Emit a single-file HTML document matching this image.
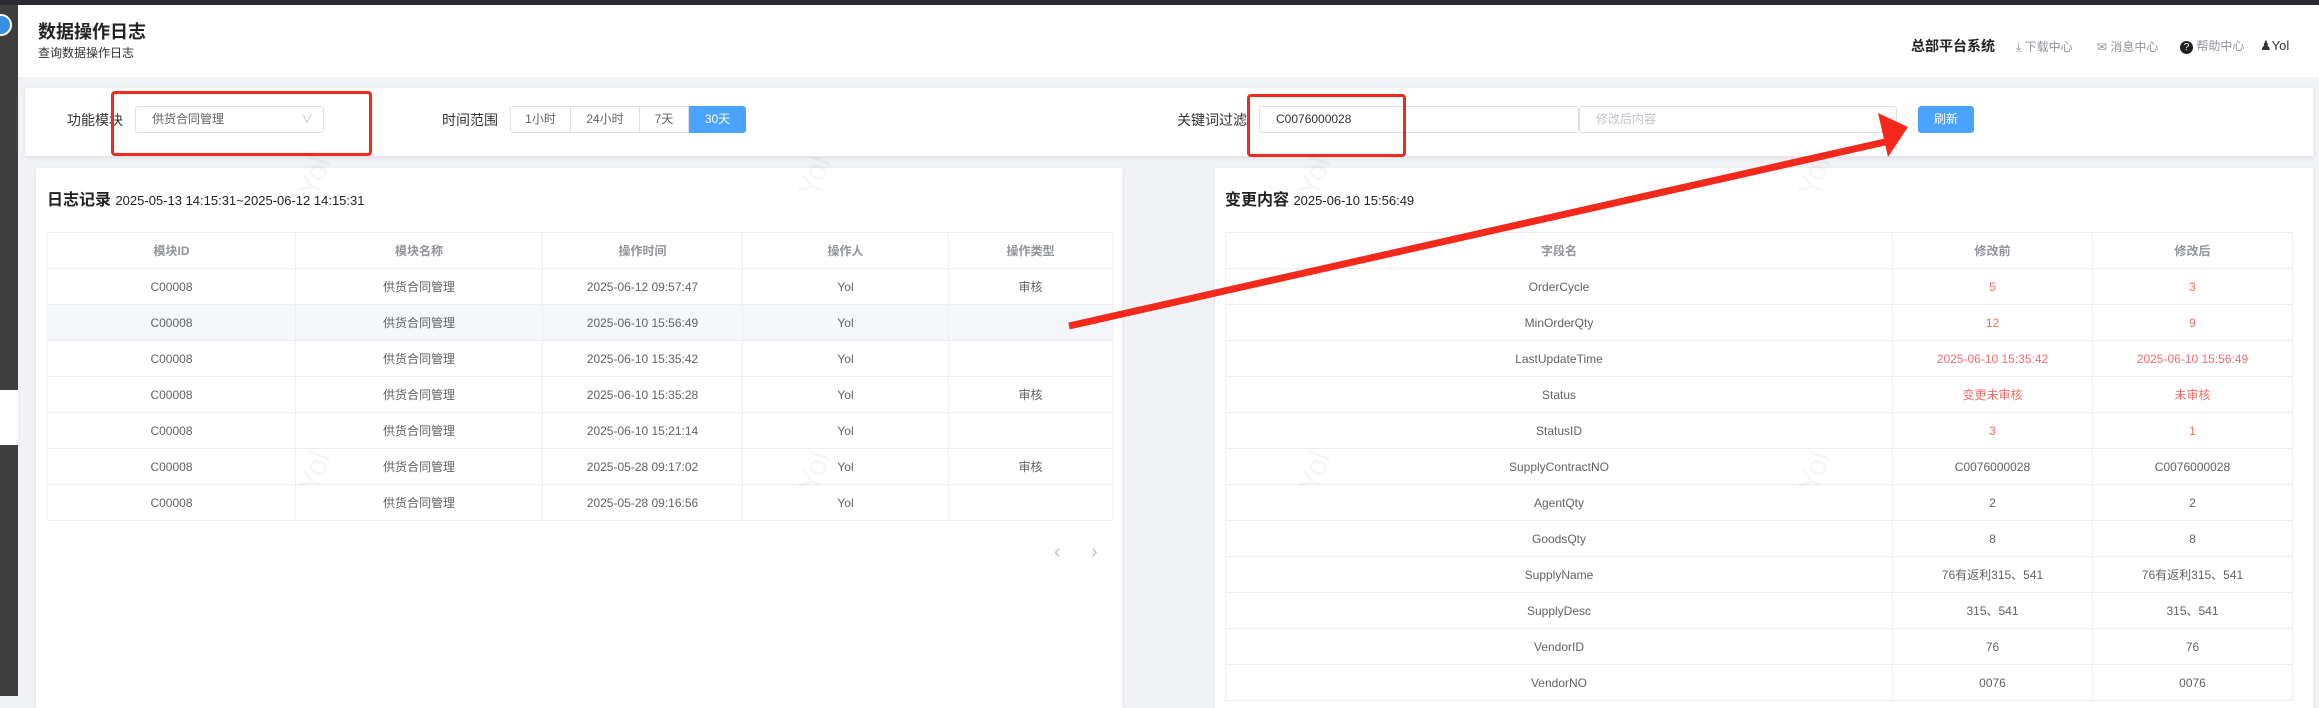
<!DOCTYPE html>
<html><head><meta charset="utf-8"><style>
*{box-sizing:border-box;margin:0;padding:0}
body{width:2319px;height:696px;overflow:hidden;background:#f0f2f5;font-family:"Liberation Sans","Noto Sans CJK SC",sans-serif;position:relative;color:#606266}
.a{position:absolute}
.top{left:0;top:0;width:2319px;height:5px;background:#2b2b33}
.side{left:0;top:5px;width:18px;height:691px;background:#3f3f3f}
.hdr{left:18px;top:5px;width:2301px;height:72px;background:#fff}
.card{background:#fff;box-shadow:0 1px 4px rgba(0,0,0,.08)}
table{border-collapse:collapse;position:absolute;table-layout:fixed;font-size:12px}
td,th{border:1px solid #ebeef5;height:36px;text-align:center;color:#606266;font-weight:normal}
th{color:#909399;font-weight:bold}
.r{color:#f56c6c}
.hl td{background:#f5f7fa}
.btn{position:absolute;top:106px;height:27px;border:1px solid #dcdfe6;font-size:12px;line-height:25px;text-align:center;color:#606266;background:#fff}
.wm{position:absolute;color:rgba(0,0,0,.035);font-size:30px;transform:rotate(-70deg)}
.red{position:absolute;border:3px solid #f5281c;border-radius:4px}
</style></head><body>
<div class="a top"></div>
<div class="a side"></div>
<div class="a" style="left:0;top:390px;width:18px;height:55px;background:#fff"></div>
<div class="a" style="left:-10px;top:14px;width:22px;height:22px;border-radius:50%;background:#3a8ee6;border:2px solid #fff"></div>
<div class="a hdr"></div>
<div class="a" style="left:38px;top:18px;font-size:18px;font-weight:bold;color:#222">数据操作日志</div>
<div class="a" style="left:38px;top:44px;font-size:12px;color:#333">查询数据操作日志</div>
<div class="a" style="left:1911px;top:36px;font-size:14px;font-weight:bold;color:#222">总部平台系统</div>
<div class="a" style="left:2016px;top:38px;font-size:12px;color:#909399">⤓ 下载中心</div>
<div class="a" style="left:2097px;top:38px;font-size:12px;color:#909399">✉ 消息中心</div>
<div class="a" style="left:2180px;top:37px;font-size:12px;color:#909399"><span style="display:inline-block;width:13px;height:13px;border-radius:50%;background:#222;color:#fff;font-size:10px;line-height:13px;text-align:center">?</span> 帮助中心</div>
<div class="a" style="left:2260px;top:38px;font-size:13px;color:#333">&#9823;Yol</div>

<div class="a card" style="left:25px;top:88px;width:2288px;height:69px;border-bottom:1px solid #e4e7ed"></div>
<div class="a" style="left:67px;top:110px;font-size:14px;color:#333">功能模块</div>
<div class="btn" style="left:135px;width:189px;text-align:left;padding-left:16px;border-radius:3px">供货合同管理<span style="position:absolute;right:10px;color:#c0c4cc">∨</span></div>
<div class="red" style="left:111px;top:91px;width:261px;height:65px"></div>
<div class="a" style="left:442px;top:110px;font-size:14px;color:#333">时间范围</div>
<div class="btn" style="left:510px;width:61px;border-radius:3px 0 0 3px">1小时</div>
<div class="btn" style="left:571px;width:69px;border-left:0">24小时</div>
<div class="btn" style="left:640px;width:49px;border-left:0">7天</div>
<div class="btn" style="left:689px;width:57px;background:#4aa3ff;border-color:#4aa3ff;color:#fff;border-radius:0 3px 3px 0">30天</div>
<div class="a" style="left:1177px;top:110px;font-size:14px;color:#333">关键词过滤</div>
<div class="btn" style="left:1259px;width:320px;text-align:left;padding-left:16px;border-radius:3px;color:#333">C0076000028</div>
<div class="btn" style="left:1579px;width:318px;text-align:left;padding-left:16px;border-radius:3px;color:#c0c4cc">修改后内容</div>
<div class="btn" style="left:1918px;width:56px;background:#4aa3ff;border-color:#4aa3ff;color:#fff;border-radius:3px">刷新</div>
<div class="red" style="left:1247px;top:94px;width:159px;height:63px"></div>

<div class="a card" style="left:36px;top:168px;width:1086px;height:540px"></div>
<div class="a" style="left:47px;top:186px;font-size:16px;font-weight:bold;color:#222">日志记录 <span style="font-size:13px;font-weight:normal">2025-05-13 14:15:31~2025-06-12 14:15:31</span></div>
<table style="left:47px;top:232px;width:1065px;border:1px solid #dcdfe6">
<colgroup><col style="width:248px"><col style="width:247px"><col style="width:200px"><col style="width:206px"><col style="width:164px"></colgroup>
<tr><th>模块ID</th><th>模块名称</th><th>操作时间</th><th>操作人</th><th>操作类型</th></tr>
<tr><td>C00008</td><td>供货合同管理</td><td>2025-06-12 09:57:47</td><td>Yol</td><td>审核</td></tr>
<tr class="hl"><td>C00008</td><td>供货合同管理</td><td>2025-06-10 15:56:49</td><td>Yol</td><td></td></tr>
<tr><td>C00008</td><td>供货合同管理</td><td>2025-06-10 15:35:42</td><td>Yol</td><td></td></tr>
<tr><td>C00008</td><td>供货合同管理</td><td>2025-06-10 15:35:28</td><td>Yol</td><td>审核</td></tr>
<tr><td>C00008</td><td>供货合同管理</td><td>2025-06-10 15:21:14</td><td>Yol</td><td></td></tr>
<tr><td>C00008</td><td>供货合同管理</td><td>2025-05-28 09:17:02</td><td>Yol</td><td>审核</td></tr>
<tr><td>C00008</td><td>供货合同管理</td><td>2025-05-28 09:16:56</td><td>Yol</td><td></td></tr>
</table>
<div class="a" style="left:1054px;top:541px;font-size:20px;color:#c0c4cc">‹</div>
<div class="a" style="left:1091px;top:541px;font-size:20px;color:#c0c4cc">›</div>

<div class="a card" style="left:1215px;top:168px;width:1098px;height:540px"></div>
<div class="a" style="left:1225px;top:186px;font-size:16px;font-weight:bold;color:#222">变更内容 <span style="font-size:13px;font-weight:normal">2025-06-10 15:56:49</span></div>
<table style="left:1225px;top:232px;width:1067px;border:1px solid #dcdfe6">
<colgroup><col style="width:667px"><col style="width:200px"><col style="width:200px"></colgroup>
<tr><th>字段名</th><th>修改前</th><th>修改后</th></tr>
<tr><td>OrderCycle</td><td class="r">5</td><td class="r">3</td></tr>
<tr><td>MinOrderQty</td><td class="r">12</td><td class="r">9</td></tr>
<tr><td>LastUpdateTime</td><td class="r">2025-06-10 15:35:42</td><td class="r">2025-06-10 15:56:49</td></tr>
<tr><td>Status</td><td class="r">变更未审核</td><td class="r">未审核</td></tr>
<tr><td>StatusID</td><td class="r">3</td><td class="r">1</td></tr>
<tr><td>SupplyContractNO</td><td>C0076000028</td><td>C0076000028</td></tr>
<tr><td>AgentQty</td><td>2</td><td>2</td></tr>
<tr><td>GoodsQty</td><td>8</td><td>8</td></tr>
<tr><td>SupplyName</td><td>76有返利315、541</td><td>76有返利315、541</td></tr>
<tr><td>SupplyDesc</td><td>315、541</td><td>315、541</td></tr>
<tr><td>VendorID</td><td>76</td><td>76</td></tr>
<tr><td>VendorNO</td><td>0076</td><td>0076</td></tr>
</table>

<div class="wm" style="left:295px;top:160px">Yol</div>
<div class="wm" style="left:795px;top:160px">Yol</div>
<div class="wm" style="left:295px;top:455px">Yol</div>
<div class="wm" style="left:795px;top:455px">Yol</div>
<div class="wm" style="left:1295px;top:160px">Yol</div>
<div class="wm" style="left:1795px;top:160px">Yol</div>
<div class="wm" style="left:1295px;top:455px">Yol</div>
<div class="wm" style="left:1795px;top:455px">Yol</div>

<svg class="a" style="left:0;top:0" width="2319" height="696">
<line x1="1069" y1="326" x2="1885" y2="142" stroke="#f5281c" stroke-width="7"/>
<polygon points="1908,127 1878,113 1888,157" fill="#f5281c"/>
</svg>
</body></html>
